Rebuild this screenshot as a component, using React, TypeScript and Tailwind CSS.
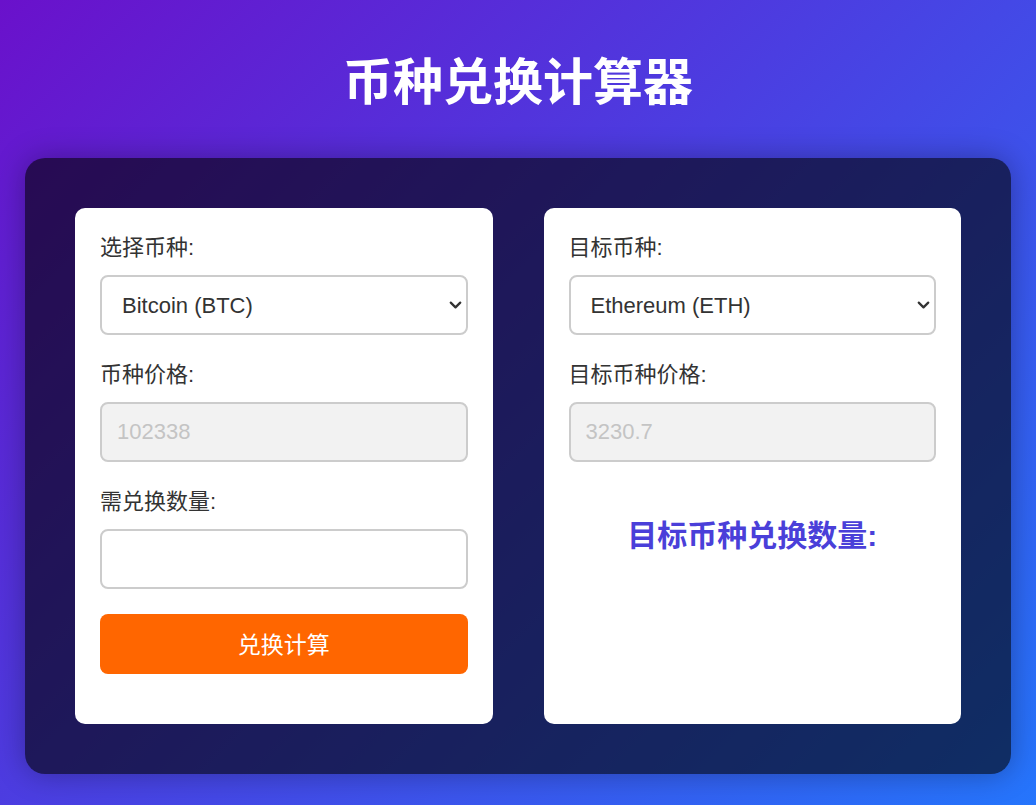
import { useState } from "react";
import { ChevronDown } from "lucide-react";

const COINS = [
  { id: "BTC", name: "Bitcoin (BTC)", price: 102338 },
  { id: "ETH", name: "Ethereum (ETH)", price: 3230.7 },
  { id: "BNB", name: "BNB (BNB)", price: 655.2 },
  { id: "SOL", name: "Solana (SOL)", price: 189.4 },
];

const labelCls = "block h-[30px] leading-[30px] text-[22px] text-[#333] mb-[12px]";
const boxCls =
  "block w-full h-[60px] rounded-lg border-2 border-[#ccc] text-[22px] outline-none";

interface CoinSelectProps {
  value: string;
  onChange: (v: string) => void;
}

function CoinSelect({ value, onChange }: CoinSelectProps) {
  return (
    <div className="relative">
      <select
        value={value}
        onChange={(e) => onChange(e.target.value)}
        className={`${boxCls} appearance-none bg-white pl-[20px] pr-[30px] text-[#333]`}
      >
        {COINS.map((c) => (
          <option key={c.id} value={c.id}>
            {c.name}
          </option>
        ))}
      </select>
      <ChevronDown
        className="pointer-events-none absolute right-[3px] top-1/2 h-[19px] w-[19px] -translate-y-1/2 text-[#333]"
        strokeWidth={2.8}
      />
    </div>
  );
}

export default function App() {
  const [from, setFrom] = useState("BTC");
  const [to, setTo] = useState("ETH");
  const [amount, setAmount] = useState("");
  const [result, setResult] = useState<string | null>(null);

  const fromCoin = COINS.find((c) => c.id === from)!;
  const toCoin = COINS.find((c) => c.id === to)!;

  // 兑换计算
  const handleCalc = () => {
    const n = parseFloat(amount);
    if (isNaN(n)) {
      setResult(null);
      return;
    }
    setResult(((n * fromCoin.price) / toCoin.price).toFixed(6));
  };

  return (
    <div
      className="min-h-[805px] w-full bg-[linear-gradient(135deg,#6a11cb,#2575fc)] px-[25px] pb-[31px]"
      style={{ fontFamily: '"Liberation Sans", Arial, "Noto Sans CJK SC", sans-serif' }}
    >
      <h1
        className="pt-[46px] h-[158px] text-center text-[50px] leading-[64px] font-bold text-white"
        style={{ fontFamily: '"Noto Sans CJK SC", sans-serif' }}
      >
        币种兑换计算器
      </h1>

      <div className="flex gap-[51px] rounded-[20px] bg-black/60 p-[50px] shadow-[0_0_30px_rgba(0,0,0,0.3)]">
        {/* 左侧 */}
        <div className="flex-1 rounded-[10px] bg-white px-[25px] pt-[25px] pb-[50px]">
          <div className="mb-[25px]">
            <label className={labelCls}>选择币种:</label>
            <CoinSelect value={from} onChange={setFrom} />
          </div>
          <div className="mb-[25px]">
            <label className={labelCls}>币种价格:</label>
            <input
              disabled
              value={fromCoin.price}
              className={`${boxCls} bg-[#f2f2f2] px-[15px] text-[#c4c4c4]`}
            />
          </div>
          <div className="mb-[25px]">
            <label className={labelCls}>需兑换数量:</label>
            <input
              value={amount}
              onChange={(e) => setAmount(e.target.value)}
              className={`${boxCls} bg-white px-[15px] text-[#333]`}
            />
          </div>
          <button
            onClick={handleCalc}
            className="block h-[60px] w-full rounded-lg bg-[#ff6600] pt-[2px] text-[23px] text-white"
          >
            兑换计算
          </button>
        </div>

        {/* 右侧 */}
        <div className="flex-1 rounded-[10px] bg-white px-[25px] pt-[25px] pb-[50px]">
          <div className="mb-[25px]">
            <label className={labelCls}>目标币种:</label>
            <CoinSelect value={to} onChange={setTo} />
          </div>
          <div className="mb-[25px]">
            <label className={labelCls}>目标币种价格:</label>
            <input
              disabled
              value={toCoin.price}
              className={`${boxCls} bg-[#f2f2f2] px-[15px] text-[#c4c4c4]`}
            />
          </div>
          <p className="mt-[54px] text-center text-[30px] leading-[40px] font-bold text-[#4a3fd9]">
            目标币种兑换数量:{result ?? ""}
          </p>
        </div>
      </div>
    </div>
  );
}
